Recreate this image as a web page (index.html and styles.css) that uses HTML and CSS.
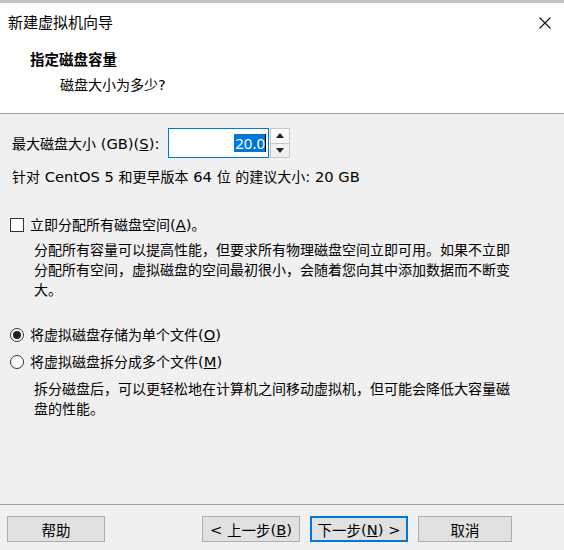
FILE: index.html
```html
<!DOCTYPE html>
<html>
<head>
<meta charset="utf-8">
<link rel="stylesheet" href="styles.css">
</head>
<body>
<div class="window">
  <div class="topstrip"></div>
  <div class="header">
    <div class="titlebar">
      <span class="title">新建虚拟机向导</span>
      <svg class="close" width="12" height="12" viewBox="0 0 12 12"><path d="M0.5 0.5 L11.5 11.5 M11.5 0.5 L0.5 11.5" stroke="#111" stroke-width="1.1" fill="none"/></svg>
    </div>
    <div class="heading">指定磁盘容量</div>
    <div class="subheading">磁盘大小为多少<span class="lt">?</span></div>
  </div>
  <div class="content">
    <div class="sizerow">
      <span class="label">最大磁盘大小<span class="lt"> (GB)(<u>S</u>):</span></span>
      <div class="spinbox">
        <div class="field"><span class="sel">20.0</span><span class="caret"></span></div>
        <div class="spin">
          <div class="spinbtn up"><svg width="8" height="5" viewBox="0 0 8 5"><path d="M0 5 L4 0 L8 5 Z" fill="#222"/></svg></div>
          <div class="spinbtn down"><svg width="8" height="5" viewBox="0 0 8 5"><path d="M0 0 L4 5 L8 0 Z" fill="#222"/></svg></div>
        </div>
      </div>
    </div>
    <div class="hint">针对<span class="lt"> CentOS 5 </span>和更早版本<span class="lt"> 64 </span>位<span class="lt"> </span>的建议大小<span class="lt">: 20 GB</span></div>
    <div class="option check-opt">
      <span class="checkbox"></span>
      <span>立即分配所有磁盘空间<span class="lt">(<u>A</u>)</span>。</span>
    </div>
    <div class="desc desc1">分配所有容量可以提高性能，但要求所有物理磁盘空间立即可用。如果不立即分配所有空间，虚拟磁盘的空间最初很小，会随着您向其中添加数据而不断变大。</div>
    <div class="option radio-opt1">
      <span class="radio checked"></span>
      <span>将虚拟磁盘存储为单个文件<span class="lt">(<u>O</u>)</span></span>
    </div>
    <div class="option radio-opt2">
      <span class="radio"></span>
      <span>将虚拟磁盘拆分成多个文件<span class="lt">(<u>M</u>)</span></span>
    </div>
    <div class="desc desc2">拆分磁盘后，可以更轻松地在计算机之间移动虚拟机，但可能会降低大容量磁盘的性能。</div>
  </div>
  <div class="footer">
    <div class="btn help">帮助</div>
    <div class="navbtns">
      <div class="btn back"><span class="lt">&lt; </span>上一步<span class="lt">(<u>B</u>)</span></div>
      <div class="btn default">下一步<span class="lt">(<u>N</u>) &gt;</span></div>
      <div class="btn cancel">取消</div>
    </div>
  </div>
</div>
</body>
</html>
```

FILE: styles.css
```css
* { box-sizing: border-box; }
html, body { margin: 0; padding: 0; }
body {
  width: 564px;
  height: 550px;
  overflow: hidden;
  background: #f0f0f0;
  font-family: "DejaVu Sans", "Noto Sans CJK SC", sans-serif;
  font-size: 14px;
  color: #000;
}
.lt { font-size: 14.7px; }
.window { width: 564px; height: 550px; display: flex; flex-direction: column; }
.topstrip { height: 3px; background: #c4c4c4; }
.header {
  background: #fff;
  height: 111px;
  border-bottom: 1px solid #a0a0a0;
}
.titlebar {
  height: 40px;
  display: flex;
  align-items: center;
  justify-content: space-between;
  padding: 0 13px 0 8px;
}
.title { font-size: 15px; line-height: 40px; }
.close { display: block; }
.heading {
  margin-top: 7px;
  padding-left: 30px;
  font-weight: bold;
  font-size: 14.5px;
  line-height: 20px;
}
.subheading {
  margin-top: 5px;
  padding-left: 60px;
  line-height: 20px;
}
.content { padding: 0 0 0 10px; height: 391px; border-bottom: 1px solid #a0a0a0; }
.sizerow {
  margin-top: 14px;
  height: 30px;
  display: flex;
  align-items: center;
  padding-left: 2px;
}
.label { width: 156px; white-space: nowrap; }
.spinbox { display: flex; height: 30px; }
.field {
  width: 101px;
  height: 30px;
  background: #fff;
  border: 1px solid #0078d7;
  display: flex;
  align-items: center;
  justify-content: flex-end;
  padding-right: 2px;
}
.sel {
  background: #0078d7;
  color: #fff;
  font-family: "Noto Sans", sans-serif;
  font-size: 15px;
  line-height: 18px;
  padding: 0 0 0 1px;
}
.caret { width: 1px; height: 18px; background: #000; }
.spin {
  width: 20px;
  height: 30px;
  margin-left: 1px;
  border: 1px solid #c8c8c8;
  background: #f0f0f0;
  display: flex;
  flex-direction: column;
}
.spinbtn {
  flex: 1;
  display: flex;
  align-items: center;
  justify-content: center;
}
.spinbtn.up { border-bottom: 1px solid #c8c8c8; background: #fafafa; }
.hint { margin-top: 9px; padding-left: 2px; line-height: 20px; white-space: nowrap; }
.option {
  display: flex;
  align-items: center;
  line-height: 20px;
  gap: 6px;
}
.check-opt { margin-top: 28px; }
.checkbox {
  width: 14px;
  height: 14px;
  border: 1px solid #333;
  background: #fff;
}
.radio {
  width: 14px;
  height: 14px;
  border: 1px solid #333;
  border-radius: 50%;
  background: #fff;
  display: flex;
  align-items: center;
  justify-content: center;
}
.radio.checked::after {
  content: "";
  width: 8px;
  height: 8px;
  border-radius: 50%;
  background: #222;
}
.desc {
  margin-left: 24px;
  width: 482px;
  line-height: 20px;
}
.desc1 { margin-top: 5px; }
.radio-opt1 { margin-top: 25px; }
.radio-opt2 { margin-top: 7px; }
.desc2 { margin-top: 7px; }
.footer {
  display: flex;
  justify-content: space-between;
  padding: 11px 52px 0 7px;
}
.navbtns { display: flex; gap: 10px; }
.btn {
  width: 98px;
  height: 26px;
  background: #e1e1e1;
  border: 1px solid #adadad;
  display: flex;
  align-items: center;
  justify-content: center;
  font-size: 14.5px;
  white-space: pre;
}
.btn.cancel { width: 94px; }
.btn.default { border: 2px solid #0078d7; }
```
